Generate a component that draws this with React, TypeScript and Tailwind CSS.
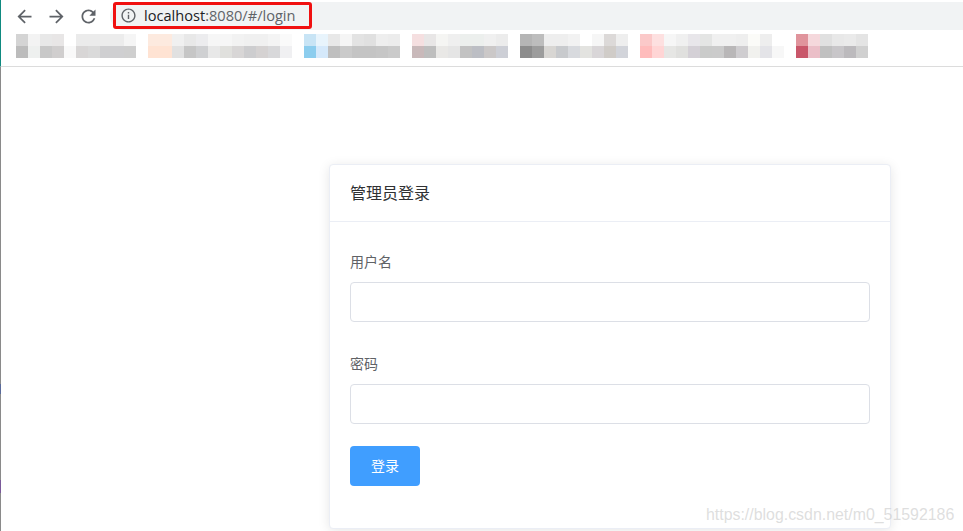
const W = "#ffffff";

// blurred bookmarks bar: one [top, bottom] pair per 12px column, starting at x=16
const mosaic: [string, string][] = [
  ["#d4d4d4", "#bcbcbc"], ["#f3f3f3", "#eef0ef"], ["#e8e8e8", "#c8c8c8"], ["#e8e6e6", "#d0cece"],
  [W, "#f9f9f9"], ["#ebebeb", "#d8d6d6"], ["#ebebeb", "#dadada"], ["#ececec", "#cfcfd1"],
  ["#ececec", "#cfcfd1"], ["#f5f5f5", "#cfcfcf"], [W, W],
  ["#fdeadf", "#ffe3d3"], ["#fdeadf", "#ffe3d3"], ["#f0f0f0", "#e1e1e1"], ["#e8e8e8", "#c6c6c6"],
  ["#ececee", "#cfd0d2"], ["#f6f6f6", "#e8e8e8"], ["#f6f6f6", "#e0e0dd"], ["#f2f2f2", "#d8d6d6"],
  ["#f0f0f0", "#cdcdcf"], ["#f0f0f0", "#d5d2d2"], ["#f4f4f4", "#d8d8da"], ["#fafafa", "#f0f0f2"], [W, W],
  ["#c8e4f5", "#8ccdee"], ["#e8f4fc", "#d5e9fb"], ["#e8e8e8", "#bfbfbf"], ["#f5f5f5", "#cacaca"],
  ["#e3e3e3", "#c4c4c4"], ["#e0e0e0", "#c4c4c4"], ["#eeeeee", "#c6c6c6"], ["#ececec", "#cacaca"], [W, W],
  ["#f5dfe0", "#c9b9ba"], ["#e8e6e6", "#bebebe"], ["#f5f5f3", "#e9e8e6"], ["#efefef", "#e5e5e5"],
  ["#ecefed", "#c2c2c2"], ["#ecefed", "#bcbec4"], ["#f0f0f0", "#cbc8c8"], ["#ececec", "#cdcfd6"], [W, W],
  ["#b5b5b5", "#8c8c8c"], ["#bdbdbd", "#9c9c9c"], ["#eeeeee", "#d8d6d3"], ["#eeeeee", "#c8cacd"],
  ["#f2f2f2", "#d8dade"], [W, "#e3e3e0"], ["#f6f6f6", "#d9d6d8"], ["#dcd9d8", "#d0ccc8"], ["#eeeeee", "#d2d4da"], [W, W],
  ["#fbc9c9", "#ffbcbc"], ["#fde0e0", "#ffd5d5"], ["#f6f6f6", "#e6e6e4"], ["#f0f0f0", "#e0e0de"],
  ["#e8e6ea", "#d4d0d6"], ["#e4e5e4", "#cacbca"], ["#f0f0f0", "#cbcbcb"], ["#f0f0f0", "#b9b7b8"],
  ["#eeeeee", "#cfcdd0"], ["#fbfbf8", "#f1f1ee"], ["#eeeeee", "#e4e4e8"], [W, "#f7f7f7"], [W, W],
  ["#e0949c", "#c9576a"], ["#f5d8dc", "#ebbfc8"], ["#e0e0e0", "#c0c0c0"], ["#e8e8e8", "#c8c6c9"],
  ["#eaeaea", "#bcbabd"], ["#e4e4e4", "#d0d0d0"],
];

function NavIcon({ d, className }: { d: string; className: string }) {
  return (
    <svg viewBox="0 0 24 24" className={className} fill="#5f6368">
      <path d={d} />
    </svg>
  );
}

function Field({ label }: { label: string }) {
  return (
    <div className="mb-[22px]">
      <label className="block h-10 leading-[38px] text-sm text-[#606266]">{label}</label>
      <input className="block w-full h-10 rounded border border-[#dcdfe6] bg-white px-[15px] outline-none" />
    </div>
  );
}

export default function App() {
  return (
    <div className="relative h-[531px] w-[963px] overflow-hidden bg-white font-['Noto_Sans_CJK_SC',sans-serif]">
      {/* browser chrome */}
      <div className="h-[67px] border-b border-[#dcdcdc] border-l border-l-[#0f8a80]">
        <div className="flex items-start h-8">
          <div className="flex items-center gap-[11px] w-[98px] shrink-0 pl-[12.5px] pt-[6px]">
            <NavIcon className="w-[21px] h-[21px]" d="M20 11H7.83l5.59-5.59L12 4l-8 8 8 8 1.41-1.41L7.83 13H20v-2z" />
            <NavIcon className="w-[21px] h-[21px]" d="M12 4l-1.41 1.41L16.17 11H4v2h12.17l-5.58 5.59L12 20l8-8z" />
            <NavIcon className="w-[21px] h-[21px]" d="M17.65 6.35C16.2 4.9 14.21 4 12 4c-4.42 0-7.99 3.58-7.99 8s3.57 8 7.99 8c3.73 0 6.84-2.55 7.73-6h-2.08c-.82 2.33-3.04 4-5.65 4-3.31 0-6-2.69-6-6s2.69-6 6-6c1.66 0 3.14.69 4.22 1.78L13 11h7V4l-2.35 2.35z" />
          </div>
          <div className="flex-1 ml-[11px] mt-[2px] h-7 bg-[#f1f3f4] rounded-l-[14px]">
            <div className="flex items-center gap-[7px] w-[199px] h-[27px] ml-[3px] pl-[4px] border-[3px] border-[#f01010] rounded-[3px] font-['Open_Sans',sans-serif] text-[14.6px] whitespace-nowrap">
              <NavIcon className="w-[17px] h-[17px]" d="M11 7h2v2h-2zm0 4h2v6h-2zm1-9C6.48 2 2 6.48 2 12s4.48 10 10 10 10-4.48 10-10S17.52 2 12 2zm0 18c-4.41 0-8-3.59-8-8s3.59-8 8-8 8 3.59 8 8-3.59 8-8 8z" />
              <span className="text-[#202124]">
                localhost<span className="text-[#5f6368]">:8080/#/login</span>
              </span>
            </div>
          </div>
        </div>
        <div className="flex pl-[15px] pt-[2px]">
          {mosaic.map(([top, bottom], i) => (
            <div key={i} className="w-3">
              <div className="h-3" style={{ backgroundColor: top }} />
              <div className="h-3" style={{ backgroundColor: bottom }} />
            </div>
          ))}
        </div>
      </div>

      {/* page */}
      <div className="h-[464px] border-l border-[#8a8a8a] pl-[328px] pt-[97px]">
        <div className="w-[562px] rounded border border-[#ebeef5] bg-white shadow-[0_2px_12px_0_rgba(0,0,0,0.1)]">
          <div className="h-[57px] border-b border-[#ebeef5] px-5 pb-[2px] flex items-center text-base text-[#303133]">
            管理员登录
          </div>
          <div className="p-5">
            <Field label="用户名" />
            <Field label="密码" />
            <button className="mb-[22px] block w-[70px] h-10 pb-[2px] rounded bg-[#409eff] text-sm text-white">登录</button>
          </div>
        </div>
      </div>

      {/* coloured bits of the window behind, showing along the left edge */}
      <div className="absolute left-0 top-[480px] h-[13px] w-px bg-[#7a5a9a]" />
      <div className="absolute left-0 top-[384px] h-[10px] w-px bg-[#5a6a9a]" />

      {/* csdn watermark */}
      <span className="absolute left-[706px] top-[503px] font-['Liberation_Sans',sans-serif] text-[15.9px] text-[#c8c8c8]/60 whitespace-nowrap">
        https://blog.csdn.net/m0_51592186
      </span>
    </div>
  );
}
